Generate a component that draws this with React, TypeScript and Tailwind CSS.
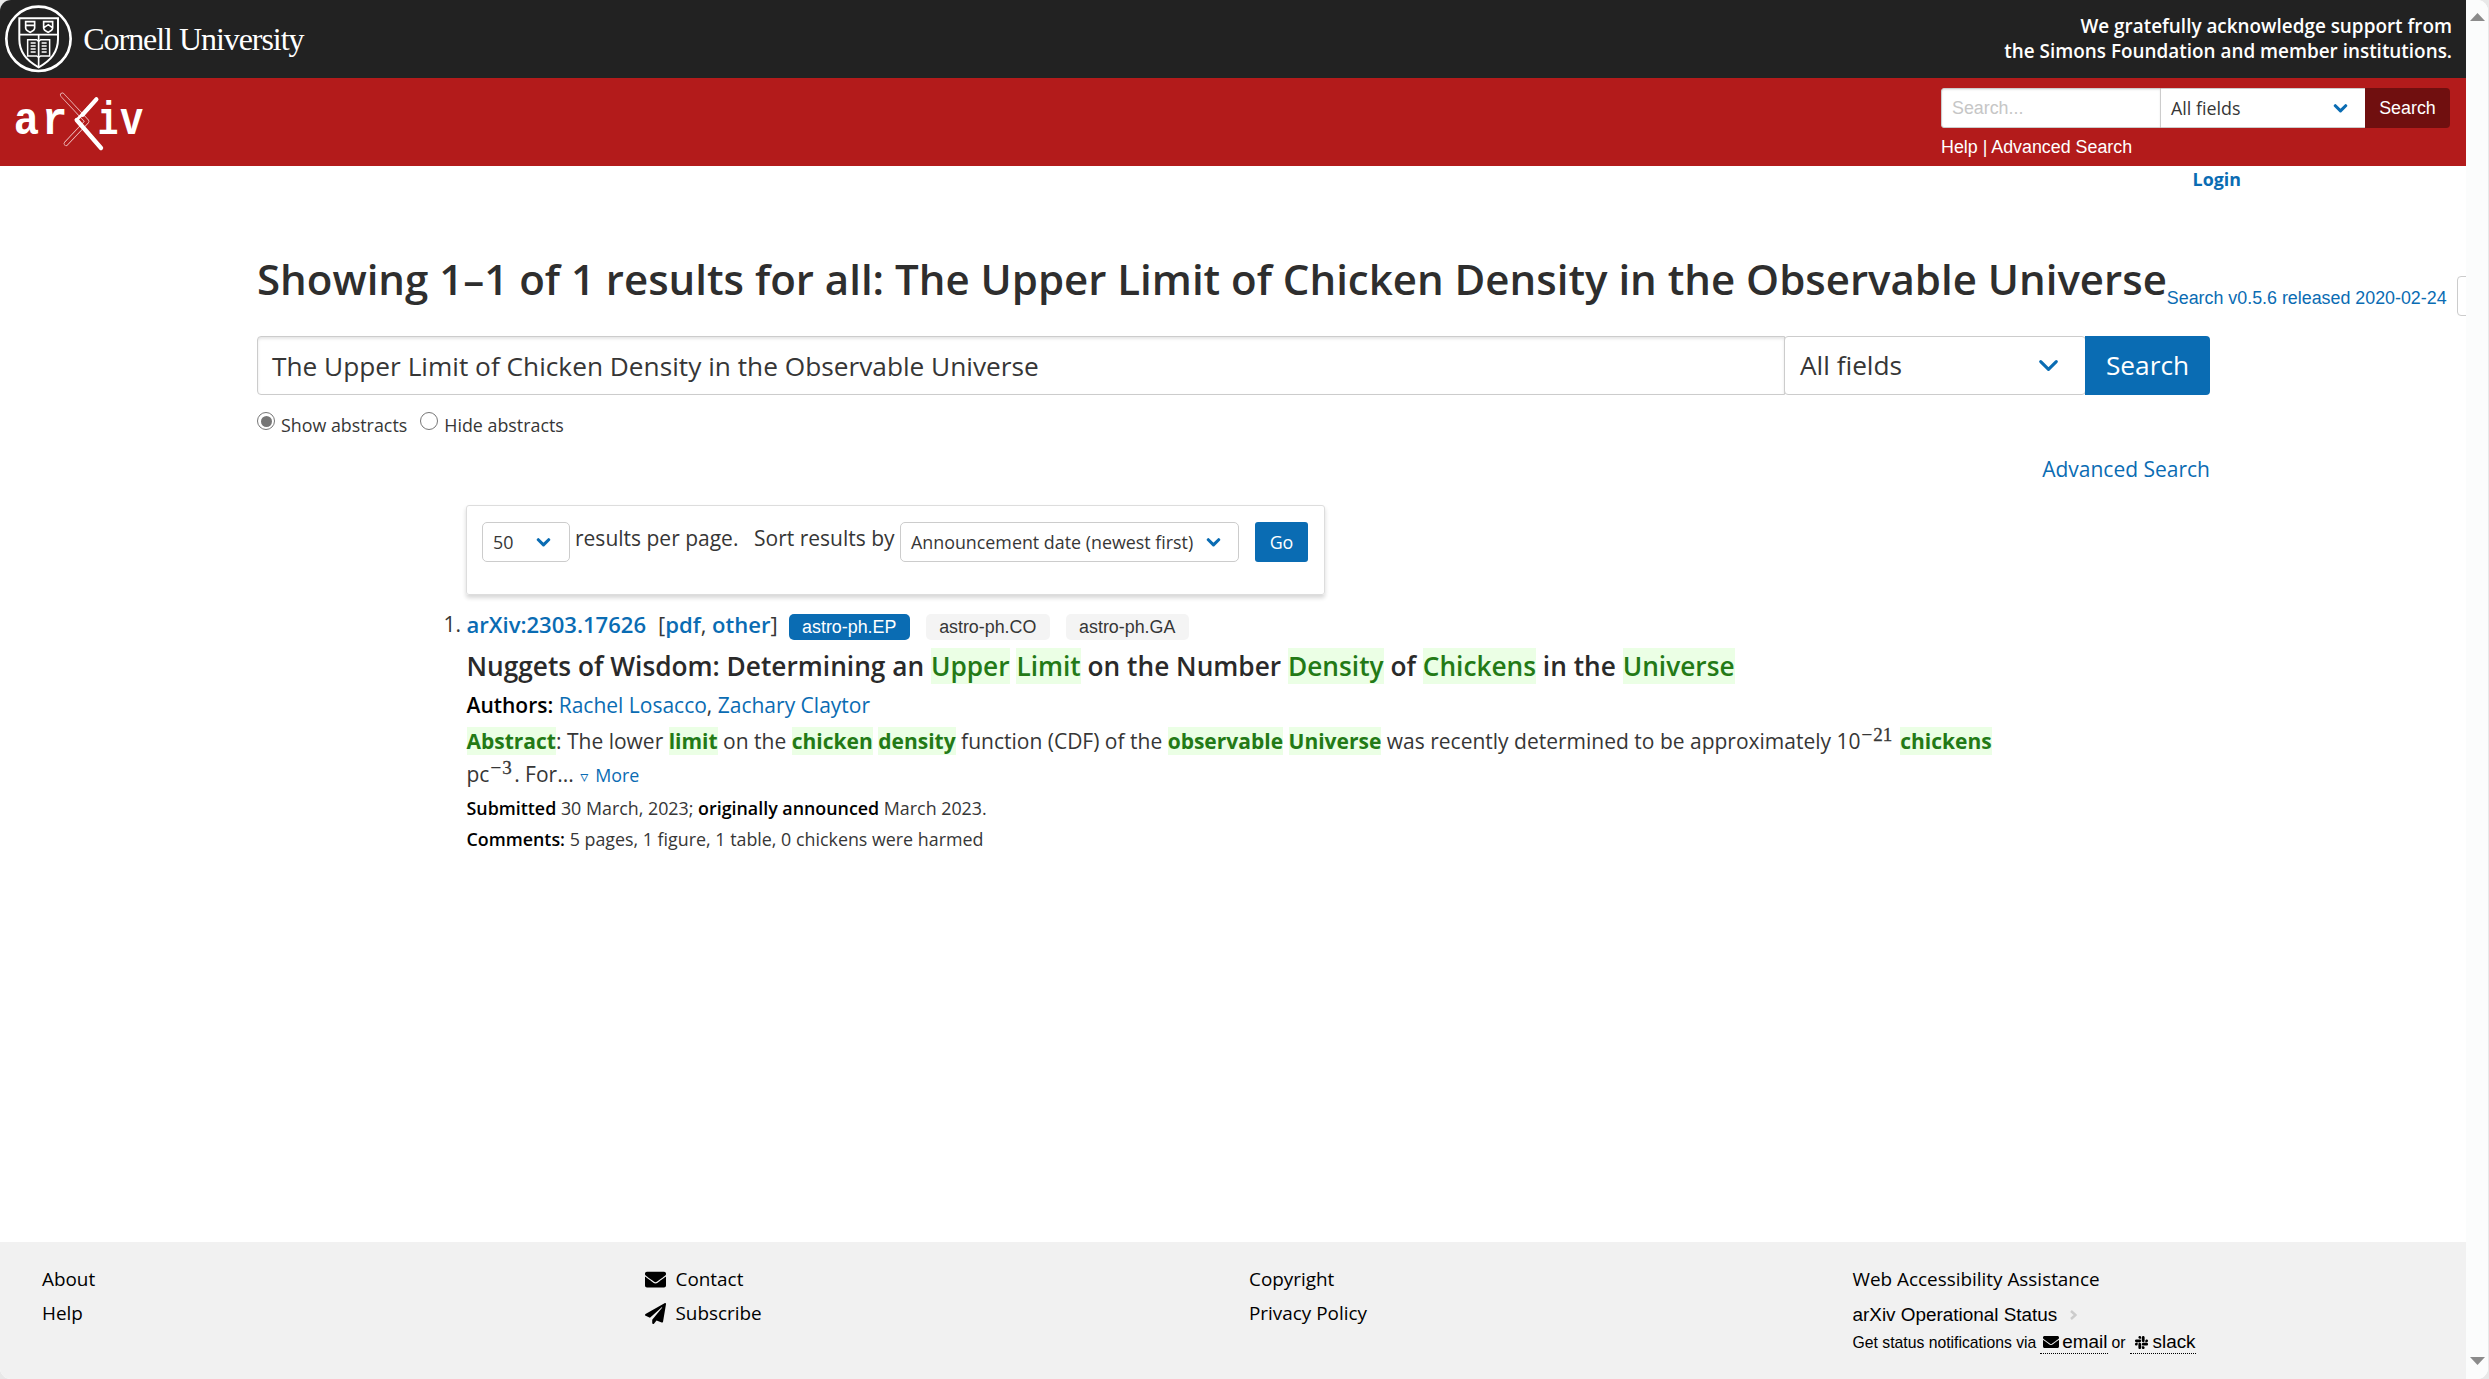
import type { ReactNode } from "react";
import { FaEnvelope, FaPaperPlane, FaSlack } from "react-icons/fa";

const link = "text-[#0a6cb3]";

function CornellSeal() {
  return (
    <svg viewBox="0 0 220 231" className="h-[77px] w-[73.3px] shrink-0" fill="none" stroke="#fff">
      <circle cx="115.5" cy="116.5" r="96.5" strokeWidth="8" />
      <path d="M58 55H174V118C174 160 146 186 116 202C86 186 58 160 58 118Z" strokeWidth="6" />
      <path d="M58 104H174M116 104V202" strokeWidth="5" />
      <path d="M77 65H104V84C104 91 97 94 90.500 97C84 94 77 91 77 84ZM77 76H104" strokeWidth="5" />
      <path d="M131 65H158V84C158 91 151 94 144.500 97C138 94 131 91 131 84ZM133 82L145 74L156 82" strokeWidth="5" />
      <path d="M83 119H110L116 124L122 119H149V168H122L116 172L110 168H83Z" strokeWidth="4.5" />
      <path d="M92 129H107M92 138H107M92 147H107M92 156H107M125 129H140M125 138H140M125 147H140M125 156H140" strokeWidth="4.500" />
    </svg>
  );
}

function ArxivLogo() {
  return (
    <svg viewBox="0 0 480 264" className="h-[88px] w-[160px]" fill="none">
      <g fill="#fff" fontFamily="'Liberation Mono', monospace" fontWeight="700" fontSize="138">
        <text x="41" y="168" textLength="76" lengthAdjust="spacingAndGlyphs">a</text>
        <text x="126" y="168" textLength="76" lengthAdjust="spacingAndGlyphs">r</text>
        <text x="293" y="168" textLength="62" lengthAdjust="spacingAndGlyphs">i</text>
        <text x="360" y="168" textLength="70" lengthAdjust="spacingAndGlyphs">v</text>
      </g>
      <g strokeLinecap="round">
        <path d="M187 51L261 130L198 197" stroke="#f6d5d5" strokeWidth="14" strokeLinejoin="round" />
        <path d="M187 51L261 130L198 197" stroke="#b31b1b" strokeWidth="10" strokeLinejoin="round" />
        <path d="M289 64L248 110" stroke="#fff" strokeWidth="13" />
        <path d="M230 126L303 210" stroke="#fff" strokeWidth="13" />
        <path d="M290 63L230 126" stroke="#fff" strokeWidth="8" />
      </g>
    </svg>
  );
}

function Chevron({ className, width = 3 }: { className: string; width?: number }) {
  return (
    <svg viewBox="0 0 20 13" className={`shrink-0 ${className}`} fill="none" stroke="#0a6cb3" strokeWidth={width} strokeLinecap="round" strokeLinejoin="round">
      <path d="M2.500 2.500L10 10L17.500 2.500" />
    </svg>
  );
}

function Hit({ children, bold = true }: { children: ReactNode; bold?: boolean }) {
  return <span className={`bg-[#ebffe5] text-[#237a16] ${bold ? "font-bold" : ""}`}>{children}</span>;
}

function Power({ digits }: { digits: string }) {
  return (
    <span className="relative -top-[8px] ml-px mr-[2.500px] font-['Liberation_Serif',serif] text-[19px] leading-none [-webkit-text-stroke:0.3px]">
      −<span className="ml-px">{digits}</span>
    </span>
  );
}

function Header() {
  return (
    <header>
      <div className="flex h-[78px] justify-between bg-[#222]">
        <div className="flex">
          <CornellSeal />
          <span className="ml-[10px] font-['Liberation_Serif',serif] text-[32px] leading-[78px] tracking-[-1.05px] text-white">Cornell University</span>
        </div>
        <p className="mr-[14px] mt-[14px] text-right text-[18.9px] font-semibold leading-[25.3px] text-white">
          We gratefully acknowledge support from
          <br />
          the Simons Foundation and member institutions.
        </p>
      </div>
      <div className="flex h-[88px] justify-between bg-[#b31b1b] font-['Liberation_Sans',sans-serif] text-[17.85px]">
        <ArxivLogo />
        <div className="mr-[16px] mt-[10px] w-[509px]">
          <div className="flex h-[40px]">
            <div className="flex w-[220px] items-center rounded-l-[3px] border border-[#ccc] bg-white pl-[10px] text-[#c6c6c6] shadow-[inset_0_1px_2px_rgba(10,10,10,0.1)]">Search...</div>
            <div className="flex w-[204px] items-center justify-between border-y border-[#ccc] bg-white pl-[10px] pr-[17px] font-['Open_Sans',sans-serif] text-[#363636]">
              All fields
              <Chevron className="h-[9px] w-[15px]" width={4.5} />
            </div>
            <div className="flex w-[85px] items-center justify-center rounded-r-[4px] bg-[#700f0f] text-white">Search</div>
          </div>
          <div className="mt-[6px] leading-[27px] text-white">Help | Advanced Search</div>
        </div>
      </div>
    </header>
  );
}

function SearchForm() {
  return (
    <div>
      <div className="flex h-[59px] items-start whitespace-nowrap">
        <h1 className="pt-px text-[42px] font-semibold leading-[42px] text-[#2e2e2e]">
          Showing 1–1 of 1 results for all: The Upper Limit of Chicken Density in the Observable Universe
        </h1>
        <div className="mt-[19px] flex h-[40px] items-center">
          <span className={`pt-[4px] font-['Liberation_Sans',sans-serif] text-[17.85px] ${link}`}>Search v0.5.6 released 2020-02-24</span>
          <span className="ml-[10px] h-[40px] w-[80px] shrink-0 rounded-[4px] border border-[#ccc]" />
        </div>
      </div>
      <div className="mt-[20px] flex h-[59px] text-[26.25px] text-[#363636]">
        <div className="flex flex-1 items-center rounded-l-[4px] border border-[#ccc] pl-[14px] pt-[2px] shadow-[inset_0_2px_3px_rgba(10,10,10,0.1)]">
          The Upper Limit of Chicken Density in the Observable Universe
        </div>
        <div className="-ml-px flex w-[302px] items-center justify-between rounded-[4px] border border-[#ccc] bg-white pl-[15px] pr-[26px]">
          All fields
          <Chevron className="h-[13.500px] w-[21px]" />
        </div>
        <div className="-ml-px flex w-[125px] items-center justify-center rounded-r-[4px] bg-[#0a6cb3] text-white">Search</div>
      </div>
      <div className="mt-[16px] flex h-[27px] text-[17.85px] leading-[29px]">
        <span className="mt-px flex size-[18px] items-center justify-center rounded-full border-[1.500px] border-[#767676]">
          <span className="size-[11px] rounded-full bg-[#767676]" />
        </span>
        <span className="ml-[6px]">Show abstracts</span>
        <span className="ml-[13px] mt-px size-[18px] rounded-full border-[1.500px] border-[#767676]" />
        <span className="ml-[6px]">Hide abstracts</span>
      </div>
      <div className={`mt-[15px] text-right leading-[32px] ${link}`}>Advanced Search</div>
    </div>
  );
}

function SortBar() {
  return (
    <div className="mt-[20px] flex h-[90px] w-[859px] items-start whitespace-nowrap rounded-[3px] border border-[#ddd] pl-[15px] pt-[16px] shadow-[0_3px_4px_rgba(0,0,0,0.16)]">
      <div className="flex h-[40px] w-[88px] items-center justify-between rounded-[5px] border border-[#ccc] pl-[10px] pr-[18px] text-[17.85px] text-[#363636]">
        50
        <Chevron className="h-[9px] w-[15px]" width={4.5} />
      </div>
      <span className="ml-[5px] w-[179px] leading-[32px]">results per page.</span>
      <span className="w-[146px] leading-[32px]">Sort results by</span>
      <div className="flex h-[40px] w-[339px] items-center justify-between rounded-[5px] border border-[#ccc] pl-[10px] pr-[17px] text-[17.85px] text-[#363636]">
        Announcement date (newest first)
        <Chevron className="h-[9px] w-[15px]" width={4.5} />
      </div>
      <div className="ml-[16px] flex h-[40px] w-[53px] items-center justify-center rounded-[3px] bg-[#0a6cb3] text-[17.85px] text-white">Go</div>
    </div>
  );
}

function Result() {
  return (
    <article className="ml-[0.500px] text-[#363636]">
      <div className="mt-[12px] flex h-[32px] items-start leading-[34px]">
        <span className="-ml-[23px] w-[23px]">1.</span>
        <span className="text-[22.05px] font-semibold">
          <span className={link}>arXiv:2303.17626</span>
          <span className="ml-[12px]">
            <span className="font-medium">[</span>
            <span className={link}>pdf</span>
            <span className="font-normal">, </span>
            <span className={link}>other</span>
            <span className="font-medium">]</span>
          </span>
        </span>
        <div className="ml-[11px] mt-[7px] flex gap-[16px] font-['Liberation_Sans',sans-serif] text-[17.85px] leading-[26px]">
          <span className="w-[121px] rounded-[5px] bg-[#0a6cb3] text-center text-white">astro-ph.EP</span>
          <span className="w-[124px] rounded-[5px] bg-[#f4f4f4] text-center">astro-ph.CO</span>
          <span className="w-[123px] rounded-[5px] bg-[#f4f4f4] text-center">astro-ph.GA</span>
        </div>
      </div>
      <h2 className="mt-[11px] text-[26.25px] font-semibold leading-[33px] text-[#2a2a2a]">
        Nuggets of Wisdom: Determining an <Hit bold={false}>Upper</Hit> <Hit bold={false}>Limit</Hit> on the Number{" "}
        <Hit bold={false}>Density</Hit> of <Hit bold={false}>Chickens</Hit> in the <Hit bold={false}>Universe</Hit>
      </h2>
      <p className="mt-[6px] leading-[32px]">
        <span className="font-semibold text-black">Authors:</span> <span className={link}>Rachel Losacco</span>,{" "}
        <span className={link}>Zachary Claytor</span>
      </p>
      <div className="mt-[4px] whitespace-nowrap leading-[32px]">
        <p className="h-[32.500px]">
          <Hit>Abstract</Hit>: The lower <Hit>limit</Hit> on the <Hit>chicken</Hit> <Hit>density</Hit> function (CDF) of the{" "}
          <Hit>observable</Hit> <Hit>Universe</Hit> was recently determined to be approximately 10
          <Power digits="21" /> <Hit>chickens</Hit>
        </p>
        <p className="h-[32px]">
          pc
          <Power digits="3" />. For...{" "}
          <span className={`text-[17.85px] ${link}`}>
            <span className="ml-px inline-block w-[15px] font-['DejaVu_Sans',sans-serif] text-[16px]">▿</span>More
          </span>
        </p>
      </div>
      <p className="mt-[5px] text-[17.85px] leading-[27px]">
        <span className="font-semibold text-black">Submitted</span> 30 March, 2023;{" "}
        <span className="font-semibold text-black">originally announced</span> March 2023.
      </p>
      <p className="mt-[4px] text-[17.85px] leading-[27px]">
        <span className="font-semibold text-black">Comments:</span> 5 pages, 1 figure, 1 table, 0 chickens were harmed
      </p>
    </article>
  );
}

function Footer() {
  return (
    <footer className="grid h-[137px] w-[2466px] grid-cols-[603.5px_603.5px_603.5px_1fr] bg-[#f1f1f1] pl-[42px] pt-[21px] text-[18.9px] leading-[33.500px] text-black">
      <div>
        <p>About</p>
        <p>Help</p>
      </div>
      <div className="-ml-px">
        <p className="flex items-center gap-[10px]"><FaEnvelope className="size-[21px]" />Contact</p>
        <p className="flex items-center gap-[10px]"><FaPaperPlane className="size-[21px]" />Subscribe</p>
      </div>
      <div>
        <p>Copyright</p>
        <p>Privacy Policy</p>
      </div>
      <div>
        <p>Web Accessibility Assistance</p>
        <div className="mt-[2px] flex items-center font-['Liberation_Sans',sans-serif] leading-[32px]">
          arXiv Operational Status
          <svg viewBox="0 0 7 10" className="ml-[13px] mt-px h-[10px] w-[7px]" fill="none" stroke="#ccc" strokeWidth="2.5">
            <path d="M1 1L5.500 5L1 9" />
          </svg>
        </div>
        <div className="flex items-baseline font-['Liberation_Sans',sans-serif] text-[15.75px] leading-[24px]">
          Get status notifications via
          <span className="ml-[4px] border-b-[1.500px] border-dotted border-black pl-[3px] text-[18.9px] leading-[22px]">
            <FaEnvelope className="mr-[3px] inline size-[16px] align-[-2px]" />email
          </span>
          <span className="ml-[4px]">or</span>
          <span className="ml-[4px] border-b-[1.500px] border-dotted border-black pl-[4px] text-[18.9px] leading-[22px]">
            <FaSlack className="mr-[4px] inline size-[15px] align-[-2px]" />slack
          </span>
        </div>
      </div>
    </footer>
  );
}

export default function App() {
  return (
    <div className="h-[1379px] w-[2489px] overflow-hidden bg-[#e8e8e8] font-['Open_Sans',sans-serif] text-[21px] text-[#363636]">
      <div className="flex h-full w-[2488px] overflow-hidden rounded-[11px] bg-white">
        <div className="flex w-[2466px] shrink-0 flex-col overflow-hidden">
          <Header />
          <div className="flex h-[27px] justify-end">
            <span className={`mr-[225px] text-[17.85px] font-bold leading-[27px] ${link}`}>Login</span>
          </div>
          <main className="ml-[257px] mt-[64px] w-[1953px] flex-1">
            <SearchForm />
            <div className="ml-[209px] w-[1560px]">
              <SortBar />
              <Result />
            </div>
          </main>
          <Footer />
        </div>
        <div className="flex w-[22px] flex-col items-center justify-between bg-[#fbfcfc] pb-[14px] pt-[13px]">
          <svg viewBox="0 0 15 8" className="h-[8px] w-[15px]" fill="#8b8b8b"><path d="M7.500 0L15 8H0Z" /></svg>
          <svg viewBox="0 0 15 8" className="h-[8px] w-[15px]" fill="#8b8b8b"><path d="M7.500 8L15 0H0Z" /></svg>
        </div>
      </div>
    </div>
  );
}
